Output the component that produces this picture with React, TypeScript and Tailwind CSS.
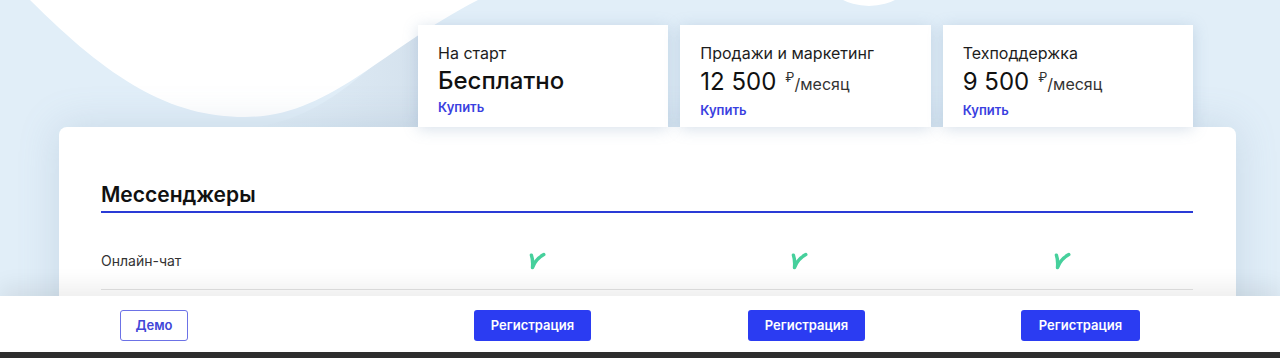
import React from 'react';

interface Plan {
  title: string;
  price: string;
  perMonth?: boolean;
}

const plans: Plan[] = [
  { title: 'На старт', price: 'Бесплатно' },
  { title: 'Продажи и маркетинг', price: '12 500', perMonth: true },
  { title: 'Техподдержка', price: '9 500', perMonth: true },
];

const Check: React.FC = () => (
  <svg width="18" height="18" viewBox="0 0 18 18" fill="none">
    <path
      d="M3.4 3.2 C4.6 6.5 4.9 10.5 4.5 15.6 C6.6 10 10.2 5.6 15.8 2.6"
      stroke="#46d09c"
      strokeWidth="3.4"
      strokeLinecap="round"
      strokeLinejoin="round"
    />
  </svg>
);

const PlanCard: React.FC<{ plan: Plan }> = ({ plan }) => (
  <div className="h-[102px] bg-white pl-[20px] pt-[18px] shadow-[0_2px_14px_rgba(110,145,180,0.28)]">
    <div className="text-[16px] leading-[20px] text-[#1d1d1d]">{plan.title}</div>
    {plan.perMonth ? (
      <div className="mt-[4px] flex items-baseline text-[24px] leading-[30px] text-[#111]">
        <span>{plan.price}</span>
        <span className="ml-[9px] text-[16px] leading-[30px] text-[#333]">
          <span className="relative -top-[8px] text-[13px]">₽</span>/месяц
        </span>
      </div>
    ) : (
      <div className="mt-[3px] text-[24px] font-medium leading-[30px] text-[#111]">{plan.price}</div>
    )}
    <a className={`${plan.perMonth ? 'mt-[2px]' : 'mt-[3px]'} block text-[13px] font-semibold leading-[16px] text-[#3a40e0]`}>
      Купить
    </a>
  </div>
);

export default function App() {
  return (
    <div className="relative h-[358px] w-[1280px] overflow-hidden bg-[#e1eef8] font-['Inter',sans-serif]">
      <svg className="absolute left-0 top-0" width="1280" height="200" viewBox="0 0 1280 200">
        <defs>
          <linearGradient id="shade" x1="0" y1="0" x2="1" y2="0">
            <stop offset="0" stopColor="#d6e3ee" stopOpacity="0" />
            <stop offset="1" stopColor="#d3e0ec" stopOpacity="0.9" />
          </linearGradient>
        </defs>
        <path d="M250 127 C 330 120, 370 60, 420 30 L 420 127 Z" fill="url(#shade)" />
        <path d="M30 0 C 110 80, 170 117, 245 117 C 330 117, 380 50, 478 0 Z" fill="#ffffff" />
        <ellipse cx="869" cy="-22" rx="42" ry="28" fill="#ffffff" />
      </svg>

      <div className="relative pt-[25px]">
        <div className="pl-[418px]">
          <div className="grid w-[775px] grid-cols-3 gap-[12px]">
            {plans.map((p) => (
              <PlanCard key={p.title} plan={p} />
            ))}
          </div>
        </div>

        <div className="ml-[59px] mr-[44px] h-[260px] rounded-t-[8px] bg-white pl-[42px] pr-[43px] shadow-[0_0_40px_rgba(110,140,175,0.22)]">
          <div className="border-b-2 border-[#2a3bd6] pb-[2px] pt-[54px] text-[21px] font-semibold leading-[28px] text-[#111]">
            Мессенджеры
          </div>
          <div className="flex items-center border-b border-[#e3e3e3] pb-[18px] pt-[38px]">
            <div className="w-[317px] text-[14px] leading-[20px] text-[#333]">Онлайн-чат</div>
            <div className="grid w-[775px] grid-cols-3 gap-[12px]">
              {plans.map((p) => (
                <div key={p.title} className="flex justify-center pr-[12px]">
                  <Check />
                </div>
              ))}
            </div>
          </div>
        </div>
      </div>

      <div className="absolute bottom-[6px] left-0 right-0 flex h-[56px] items-start bg-white pl-[120px] pt-[14px] shadow-[0_-10px_22px_rgba(0,0,0,0.07)]">
        <button className="h-[31px] w-[68px] rounded-[3px] border border-[#6c72e6] text-[13px] font-semibold text-[#3f46d8]">
          Демо
        </button>
        <button className="ml-[286px] h-[31px] w-[117px] rounded-[3px] bg-[#2b3cf2] text-[13px] font-semibold text-white">
          Регистрация
        </button>
        <button className="ml-[157px] h-[31px] w-[117px] rounded-[3px] bg-[#2b3cf2] text-[13px] font-semibold text-white">
          Регистрация
        </button>
        <button className="ml-[156px] h-[31px] w-[119px] rounded-[3px] bg-[#2b3cf2] text-[13px] font-semibold text-white">
          Регистрация
        </button>
      </div>
      <div className="absolute bottom-0 left-0 right-0 h-[6px] bg-[#2e2e2e]" />
    </div>
  );
}
